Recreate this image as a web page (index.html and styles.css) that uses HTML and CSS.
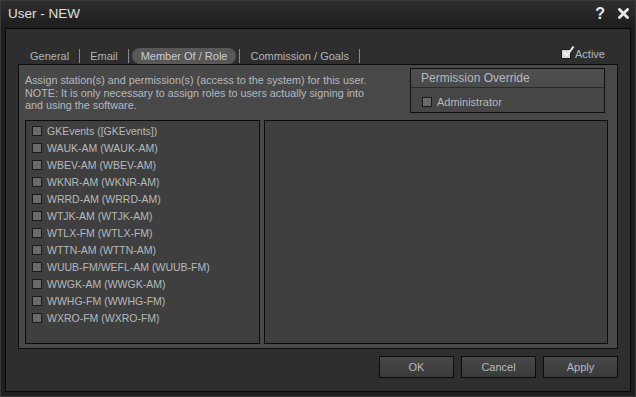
FILE: index.html
```html
<!DOCTYPE html>
<html lang="en">
<head>
    <meta charset="UTF-8">
    <meta name="viewport" content="width=device-width, initial-scale=1.0">
    <title>User - NEW</title>
    <link rel="stylesheet" href="styles.css">
</head>
<body>
    <div class="window">
        <div class="titlebar">
            <span class="title">User - NEW</span>
            <span class="title-buttons">
                <span class="tb-help">?</span>
                <svg class="tb-close" width="11" height="11" viewBox="0 0 11 11">
                    <path d="M1.5 1.5 L9.5 9.5 M9.5 1.5 L1.5 9.5" stroke="#e8e8e8" stroke-width="2.8" stroke-linecap="square"/>
                </svg>
            </span>
        </div>
        <div class="frame">
            <div class="dialog">
                <div class="tabbar">
                    <div class="tabs">
                        <span class="tab">General</span>
                        <span class="sep"></span>
                        <span class="tab">Email</span>
                        <span class="sep"></span>
                        <span class="tab active">Member Of / Role</span>
                        <span class="sep"></span>
                        <span class="tab">Commission / Goals</span>
                        <span class="sep"></span>
                    </div>
                    <label class="active-check">
                        <span class="check-box checked">
                            <svg width="14" height="14" viewBox="0 0 14 14">
                                <path d="M3 7 L6 10.5 L12.5 1.5" stroke="#f0f0f0" stroke-width="2" fill="none"/>
                            </svg>
                        </span>
                        Active
                    </label>
                </div>

                <div class="content">
                    <div class="top-row">
                        <p class="note">
                            Assign station(s) and permission(s) (access to the system) for this user.<br>
                            NOTE: It is only necessary to assign roles to users actually signing into<br>
                            and using the software.
                        </p>
                        <div class="override">
                            <div class="override-head">Permission Override</div>
                            <div class="override-body">
                                <label class="item"><span class="check-box"></span>Administrator</label>
                            </div>
                        </div>
                    </div>
                    <div class="lists">
                        <div class="list stations">
                            <label class="item"><span class="check-box"></span>GKEvents ([GKEvents])</label>
                            <label class="item"><span class="check-box"></span>WAUK-AM (WAUK-AM)</label>
                            <label class="item"><span class="check-box"></span>WBEV-AM (WBEV-AM)</label>
                            <label class="item"><span class="check-box"></span>WKNR-AM (WKNR-AM)</label>
                            <label class="item"><span class="check-box"></span>WRRD-AM (WRRD-AM)</label>
                            <label class="item"><span class="check-box"></span>WTJK-AM (WTJK-AM)</label>
                            <label class="item"><span class="check-box"></span>WTLX-FM (WTLX-FM)</label>
                            <label class="item"><span class="check-box"></span>WTTN-AM (WTTN-AM)</label>
                            <label class="item"><span class="check-box"></span>WUUB-FM/WEFL-AM (WUUB-FM)</label>
                            <label class="item"><span class="check-box"></span>WWGK-AM (WWGK-AM)</label>
                            <label class="item"><span class="check-box"></span>WWHG-FM (WWHG-FM)</label>
                            <label class="item"><span class="check-box"></span>WXRO-FM (WXRO-FM)</label>
                        </div>
                        <div class="list roles"></div>
                    </div>
                </div>

                <div class="buttons">
                    <button class="btn">OK</button>
                    <button class="btn">Cancel</button>
                    <button class="btn">Apply</button>
                </div>
            </div>
        </div>
    </div>
</body>
</html>
```

FILE: styles.css
```css
body {
    margin: 0;
    padding: 0;
    background-color: #1c1c1c;
    font-family: "Liberation Sans", Arial, sans-serif;
    font-size: 11px;
    color: #b4b9be;
}
.window {
    width: 636px;
    height: 397px;
    box-sizing: border-box;
    border: 1px solid #3a3a3a;
    background: #1e1e1e;
    display: flex;
    flex-direction: column;
}
.titlebar {
    height: 27px;
    flex: none;
    display: flex;
    align-items: center;
    justify-content: space-between;
    padding: 0 6px 0 7px;
    background: linear-gradient(#2e2e2e, #1d1d1d);
}
.title {
    font-size: 13.5px;
    color: #e0e0e0;
    margin-top: -2px;
}
.title-buttons {
    display: flex;
    align-items: center;
    gap: 13px;
    margin-top: -2px;
}
.tb-help {
    font-size: 16px;
    font-weight: bold;
    color: #e8e8e8;
}
.frame {
    flex: 1;
    padding: 0 4px 4px 4px;
    display: flex;
}
.dialog {
    flex: 1;
    border: 1px solid #080808;
    background: #2e2e2e;
    display: flex;
    flex-direction: column;
    padding: 0 12px 0 12px;
}
.tabbar {
    height: 35px;
    display: flex;
    align-items: flex-end;
    justify-content: space-between;
}
.tabs {
    display: flex;
    align-items: center;
    padding-left: 4px;
    padding-bottom: 0;
}
.tab {
    padding: 2px 8px 2px 8px;
    color: #b0b5ba;
    border-radius: 8px;
}
.tab.active {
    background: #585858;
    color: #c8ccd0;
    padding: 2px 9px 2px 9px;
    margin: 0 1px;
}
.sep {
    width: 1px;
    height: 14px;
    background: #8a8a8a;
    margin: 0 2px;
}
.active-check {
    display: flex;
    align-items: center;
    padding-bottom: 4px;
    margin-right: 13px;
    color: #b4b9be;
}
.check-box {
    width: 8px;
    height: 8px;
    border: 1px solid #1a1a1a;
    background: #6a6a6a;
    margin-right: 5px;
    position: relative;
    flex: none;
}
.check-box.checked {
    background: #d8d8d8;
    margin-right: 4px;
}
.check-box svg {
    position: absolute;
    left: -1px;
    top: -5px;
}
.content {
    height: 285px;
    box-sizing: border-box;
    border: 1px solid #0c0c0c;
    background: #484848;
    display: flex;
    flex-direction: column;
    padding: 3px 9px 4px 6px;
}
.top-row {
    display: flex;
    justify-content: space-between;
    height: 52px;
}
.note {
    margin: 6px 0 0 0;
    line-height: 12.5px;
    font-size: 10.8px;
}
.override {
    width: 195px;
    height: 45px;
    box-sizing: border-box;
    border: 1px solid #101010;
    margin-right: 3px;
    background: #464646;
}
.override-head {
    height: 18px;
    line-height: 18px;
    padding-left: 10px;
    font-size: 12px;
    background: linear-gradient(#4f4f4f, #4a4a4a);
    border-bottom: 1px solid #2c2c2c;
}
.override-body {
    padding: 5px 0 0 11px;
}
.lists {
    flex: 1;
    display: flex;
    gap: 4px;
}
.list {
    box-sizing: border-box;
    border: 1px solid #0c0c0c;
    background: #3f3f3f;
}
.stations {
    width: 235px;
    padding: 1px 0 0 6px;
    font-size: 10.5px;
}
.roles {
    flex: 1;
}
.item {
    display: flex;
    align-items: center;
    height: 17px;
}
.buttons {
    display: flex;
    justify-content: flex-end;
    gap: 7px;
    padding-top: 7px;
}
.btn {
    width: 75px;
    height: 22px;
    border: 1px solid #0c0c0c;
    background: linear-gradient(#484848, #3a3a3a);
    color: #b4b9be;
    font-family: "Liberation Sans", Arial, sans-serif;
    font-size: 11px;
    padding: 0;
}
```
